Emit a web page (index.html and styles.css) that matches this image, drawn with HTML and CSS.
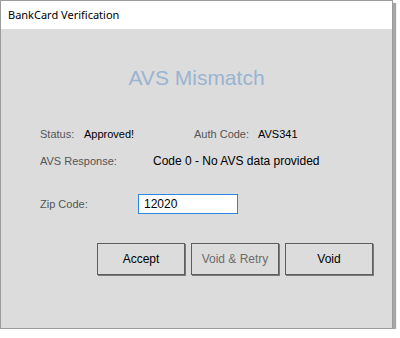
FILE: index.html
```html
<!DOCTYPE html>
<html lang="en">
<head>
  <meta charset="UTF-8">
  <title>BankCard Verification</title>
  <link rel="stylesheet" href="styles.css">
</head>
<body>
  <!-- Dialog window -->
  <div class="window">
    <header class="titlebar">BankCard Verification</header>

    <main class="content">
      <h1 class="heading">AVS Mismatch</h1>

      <div class="row">
        <span class="label status-label">Status:</span>
        <span class="value status-value">Approved!</span>
        <span class="label auth-label">Auth Code:</span>
        <span class="value">AVS341</span>
      </div>

      <div class="row row-avs">
        <span class="label avs-label">AVS Response:</span>
        <span class="value value-lg">Code 0 - No AVS data provided</span>
      </div>

      <div class="row row-zip">
        <label class="label zip-label" for="zip">Zip Code:</label>
        <input class="zip-input" id="zip" type="text" value="12020">
      </div>

      <div class="actions">
        <button class="btn">Accept</button>
        <button class="btn" disabled>Void &amp; Retry</button>
        <button class="btn">Void</button>
      </div>
    </main>
  </div>
</body>
</html>
```

FILE: styles.css
```css
/* Reset & Base */
* { box-sizing: border-box; margin: 0; padding: 0; }
body { background: #fff; font-family: 'Liberation Sans', Arial, sans-serif; }

/* Window */
.window {
  width: 393px;
  height: 329px;
  background: #dcdcdc;
  border: 1px solid #9c9c9c;
  box-shadow: 3px 3px 1px rgba(0,0,0,0.35);
}
.titlebar {
  height: 28px;
  line-height: 28px;
  padding-left: 7px;
  background: #fff;
  font-family: 'Noto Sans', sans-serif;
  font-size: 11px;
  color: #000;
}

/* Content */
.content { padding-left: 39px; }
.heading {
  margin-top: 37px;
  margin-left: -39px;
  text-align: center;
  font-size: 21px;
  line-height: 24px;
  font-weight: normal;
  color: #99b4d1;
}
.row {
  display: flex;
  align-items: baseline;
  margin-top: 37px;
  line-height: 14px;
}
.row-avs { margin-top: 13px; }
.row-zip { margin-top: 26px; align-items: center; }

.label { font-size: 11px; color: #555; }
.value { font-size: 11px; color: #000; }
.value-lg { font-size: 12px; }
.status-label { width: 44px; }
.status-value { width: 110px; }
.auth-label { width: 64px; }
.avs-label { width: 113px; }
.zip-label { width: 98px; }

.zip-input {
  width: 100px;
  height: 20px;
  padding-left: 5px;
  border: 1px solid #2a86e0;
  background: #fff;
  font-family: inherit;
  font-size: 12px;
  color: #000;
  outline: none;
}

/* Buttons */
.actions {
  display: flex;
  justify-content: flex-end;
  gap: 6px;
  margin-top: 29px;
  padding-right: 19px;
}
.btn {
  width: 88px;
  height: 32px;
  background: #dcdcdc;
  border: 1px solid #5e5e5e;
  box-shadow: 1px 1px 0 #7a7a7a;
  font-family: inherit;
  font-size: 12px;
  color: #000;
}
.btn:disabled { color: #6d6d6d; }
```
